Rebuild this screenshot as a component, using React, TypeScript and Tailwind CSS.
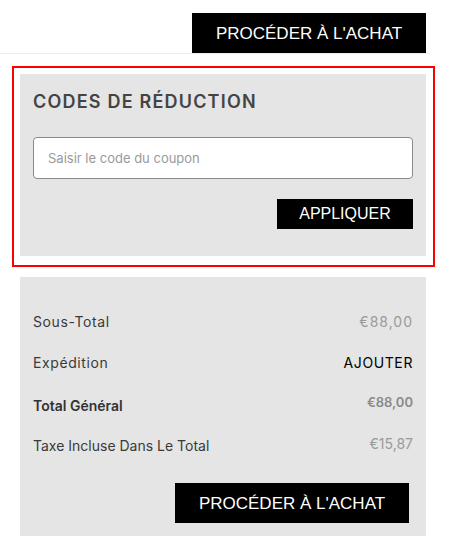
import React from "react";

const sans = "font-['Inter','Liberation_Sans',sans-serif]";
const btn = "font-['Liberation_Sans','Arial',sans-serif]";

export default function App() {
  return (
    <div className={`w-[462px] min-h-[556px] bg-white ${sans}`}>
      <div className="w-[430px] pt-[13px] border-b border-[#ececec] flex justify-end pr-[4px]">
        <button className={`${btn} w-[234px] h-[40px] bg-black text-white text-[17px] leading-none flex items-center justify-center`}>
          PROCÉDER À L'ACHAT
        </button>
      </div>

      <div className="ml-[12px] mt-[12px] w-[423px] border-2 border-[#ff0000] pl-[6px] pt-[6px] pr-[7px] pb-[9px]">
        <div className="bg-[#e5e5e5] px-[13px] pt-[16px] pb-[27px] flex flex-col">
          <h2 className="text-[18px] leading-[24px] font-semibold tracking-[1.2px] text-[#444444]">
            CODES DE RÉDUCTION
          </h2>
          <input
            className="mt-[23px] h-[42px] w-full bg-white border border-[#8a8a8a] rounded-[4px] px-[14px] text-[13px] text-[#333] placeholder:text-[#9a9a9a] outline-none"
            placeholder="Saisir le code du coupon"
          />
          <div className="mt-[20px] flex justify-end">
            <button className={`${btn} w-[136px] h-[30px] bg-black text-white text-[16px] leading-none flex items-center justify-center`}>
              APPLIQUER
            </button>
          </div>
        </div>
      </div>

      <div className="ml-[20px] mt-[10px] w-[406px] bg-[#e5e5e5] px-[13px] pt-[35px] pb-[13px] flex flex-col">
        <div className="flex justify-between items-start h-[20px] text-[14px] leading-[20px]">
          <span className="text-[#3a3a3a] tracking-[0.6px]">Sous-Total</span>
          <span className="text-[#9a9a9a] tracking-[1px]">€88,00</span>
        </div>
        <div className="mt-[21px] flex justify-between items-start h-[20px] text-[14px] leading-[20px]">
          <span className="text-[#3a3a3a] tracking-[0.6px]">Expédition</span>
          <span className="text-black tracking-[0.6px]">AJOUTER</span>
        </div>
        <div className="mt-[23px] flex justify-between items-start h-[20px] text-[14px] leading-[20px]">
          <span className="text-[#333333] font-semibold">Total Général</span>
          <span className="text-[#8a8a8a] font-semibold text-[13px] -mt-[4px]">€88,00</span>
        </div>
        <div className="mt-[20px] flex justify-between items-start h-[20px] text-[14px] leading-[20px]">
          <span className="text-[#3a3a3a]">Taxe Incluse Dans Le Total</span>
          <span className="text-[#9a9a9a] -mt-[2px]">€15,87</span>
        </div>
        <div className="mt-[27px] flex justify-end pr-[4px]">
          <button className={`${btn} w-[234px] h-[40px] bg-black text-white text-[17px] leading-none flex items-center justify-center`}>
            PROCÉDER À L'ACHAT
          </button>
        </div>
      </div>
    </div>
  );
}
